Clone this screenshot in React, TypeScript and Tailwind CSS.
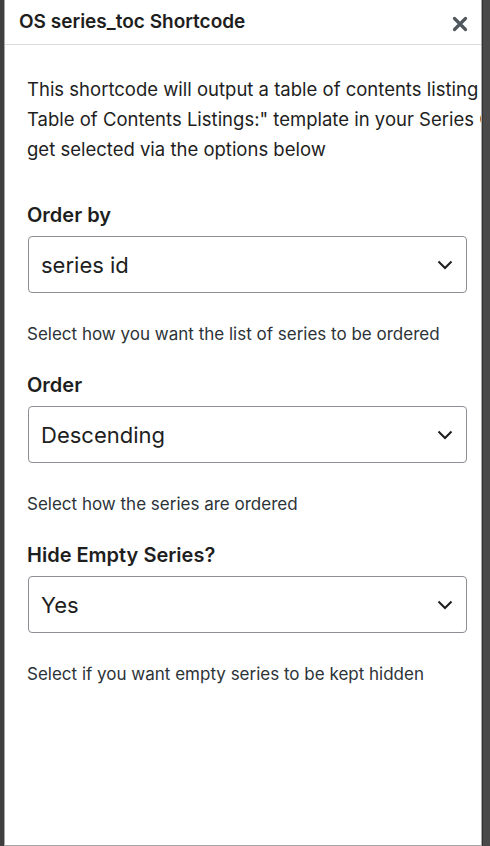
import React from "react";

function Chevron() {
  return (
    <svg width="16" height="10" viewBox="0 0 16 10" className="shrink-0">
      <path d="M1.5 1.5 L8 8 L14.5 1.5" fill="none" stroke="#1e1e1e" strokeWidth="2" />
    </svg>
  );
}

function Field({ label, value, help }: { label: string; value: string; help: string }) {
  return (
    <div className="flex flex-col">
      <div className="h-[42px] flex items-center text-[20px] font-semibold text-[#1e1e1e] leading-none">{label}</div>
      <div className="h-[57px] ml-[1px] mr-[14px] border border-[#8c8f94] rounded-[4px] flex items-center justify-between pl-[12px] pr-[13px]">
        <span className="text-[22px] text-[#1e1e1e] leading-none">{value}</span>
        <Chevron />
      </div>
      <div className="h-[71px] pt-[31px] text-[17px] leading-[20px] text-[#2c3338] whitespace-nowrap">{help}</div>
    </div>
  );
}

export default function App() {
  return (
    <div
      className="w-[490px] h-[846px] bg-[#454545] flex overflow-hidden"
      style={{ fontFamily: "Inter, 'Liberation Sans', sans-serif" }}
    >
      <div className="w-[4px] shrink-0 bg-[#3f3f3f]" />
      <div className="w-[478px] h-[846px] shrink-0 bg-white border-l border-r border-b border-[#a7a7a7] flex flex-col overflow-hidden">
        <div className="h-[45px] shrink-0 border-b border-[#dcdcde] flex items-center justify-between pl-[14px] pr-[13px]">
          <span className="text-[19px] font-semibold text-[#1e1e1e]">OS series_toc Shortcode</span>
          <svg width="16" height="16" viewBox="0 0 16 16" className="mt-[3px]">
            <path d="M2.5 2.5 L13.5 13.5 M13.5 2.5 L2.5 13.5" stroke="#50575e" strokeWidth="3.2" strokeLinecap="round" />
          </svg>
        </div>
        <div className="flex flex-col pl-[22px]">
          <div className="pt-[29px] text-[18.5px] leading-[30px] text-[#1e1e1e] whitespace-nowrap">
            <div>This shortcode will output a table of contents listing of all series using the "Series</div>
            <div>Table of Contents Listings:" template in your Series Options page. The series that will be displayed</div>
            <div>get selected via the options below</div>
          </div>
          <div className="h-[30px]" />
          <Field label="Order by" value="series id" help="Select how you want the list of series to be ordered" />
          <Field label="Order" value="Descending" help="Select how the series are ordered" />
          <Field label="Hide Empty Series?" value="Yes" help="Select if you want empty series to be kept hidden" />
        </div>
      </div>
      <div className="w-[1px] shrink-0 bg-[#333]" />
      <div className="flex-1 bg-[#4a4a4a]" />
    </div>
  );
}
